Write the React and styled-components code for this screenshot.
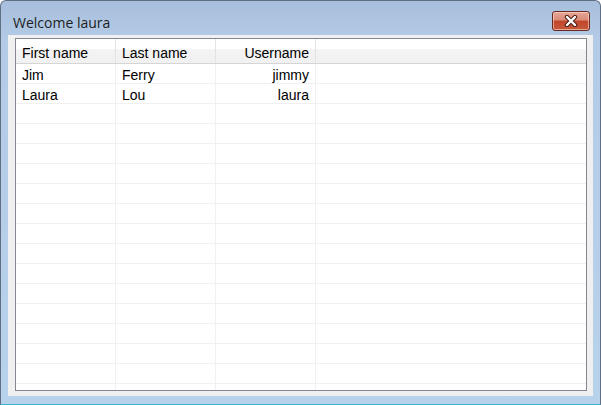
import React from "react";
import styled, { createGlobalStyle } from "styled-components";

const Global = createGlobalStyle`
  html, body { margin: 0; padding: 0; background: #ffffff; }
  * { box-sizing: border-box; }
`;

const Window = styled.div`
  width: 601px;
  height: 405px;
  border: 1px solid #5f6f84;
  border-bottom-color: #3fb0d0;
  border-radius: 6px 6px 0 0;
  background: linear-gradient(to bottom, #a7bfdc 0px, #b3cbe6 40px, #b9d2ec 100%);
  display: flex;
  flex-direction: column;
  padding: 0 7px 8px 7px;
  overflow: hidden;
`;

const TitleBar = styled.div`
  height: 34px;
  display: flex;
  align-items: flex-start;
  justify-content: space-between;
  padding: 0 3px 0 5px;
`;

const Title = styled.span`
  font-family: "Open Sans", "Noto Sans", sans-serif;
  font-size: 14px;
  line-height: 19px;
  color: #1e1e1e;
  margin-top: 12px;
`;

const CloseButton = styled.div`
  width: 38px;
  height: 20px;
  margin-top: 10px;
  border: 1px solid #6b2a20;
  border-radius: 3px;
  background: linear-gradient(to bottom, #e8a796 0%, #d98a76 45%, #c0452b 50%, #c75a3c 100%);
  box-shadow: inset 0 0 0 1px rgba(255, 220, 210, 0.6);
  display: flex;
  align-items: center;
  justify-content: center;
`;

const Client = styled.div`
  flex: 1;
  background: #f0f0f0;
  padding: 3px 6px 5px 7px;
  display: flex;
  min-height: 0;
`;

const Table = styled.div`
  flex: 1;
  border: 1px solid #828790;
  background: #ffffff;
  overflow: hidden;
  font-family: "Liberation Sans", Arial, sans-serif;
  font-size: 14px;
  color: #000000;
`;

const Row = styled.div`
  display: grid;
  grid-template-columns: 100px 100px 100px 1fr;
  height: ${(p) => (p.$header ? "25px" : "20px")};
  background: ${(p) =>
    p.$header ? "linear-gradient(to bottom, #ffffff 0%, #ffffff 40%, #f3f3f3 45%, #f1f1f1 100%)" : "#ffffff"};
  border-bottom: 1px solid ${(p) => (p.$header ? "#d5d5d5" : "#f0f0f0")};
`;

const Cell = styled.div`
  display: flex;
  align-items: center;
  justify-content: ${(p) => (p.$right ? "flex-end" : "flex-start")};
  padding-top: ${(p) => (p.$header ? "4px" : "3px")};
  padding-left: ${(p) => (p.$right ? "0" : "6px")};
  padding-right: ${(p) => (p.$right ? "6px" : "0")};
  border-right: ${(p) => (p.$last ? "none" : `1px solid ${p.$header ? "#e3e3e3" : "#f0f0f0"}`)};
  white-space: nowrap;
  overflow: hidden;
`;

const CloseIcon = () => (
  <svg width="16" height="12" viewBox="0 0 16 12">
    <path
      d="M4 2 L12 10 M12 2 L4 10"
      stroke="#4a1d18"
      strokeWidth="4.4"
      strokeLinecap="round"
      fill="none"
    />
    <path
      d="M4 2 L12 10 M12 2 L4 10"
      stroke="#ffffff"
      strokeWidth="2.4"
      strokeLinecap="round"
      fill="none"
    />
  </svg>
);

const columns = [
  { key: "first", label: "First name" },
  { key: "last", label: "Last name" },
  { key: "user", label: "Username", right: true },
];

const data = [
  { first: "Jim", last: "Ferry", user: "jimmy" },
  { first: "Laura", last: "Lou", user: "laura" },
];

const TOTAL_ROWS = 17;

export default function App() {
  const rows = [...data];
  while (rows.length < TOTAL_ROWS) rows.push(null);
  return (
    <>
      <Global />
      <Window>
        <TitleBar>
          <Title>Welcome laura</Title>
          <CloseButton>
            <CloseIcon />
          </CloseButton>
        </TitleBar>
        <Client>
          <Table>
            <Row $header>
              {columns.map((c) => (
                <Cell key={c.key} $header $right={c.right}>
                  {c.label}
                </Cell>
              ))}
              <Cell $header $last />
            </Row>
            {rows.map((r, i) => (
              <Row key={i}>
                {columns.map((c) => (
                  <Cell key={c.key} $right={c.right}>
                    {r ? r[c.key] : ""}
                  </Cell>
                ))}
                <Cell $last />
              </Row>
            ))}
          </Table>
        </Client>
      </Window>
    </>
  );
}
